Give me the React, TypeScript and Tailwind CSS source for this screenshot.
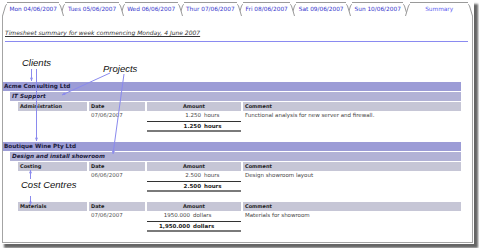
import React from "react";

// tabs across the top, last one is the active "Summary" tab
const tabs = [
  "Mon 04/06/2007",
  "Tues 05/06/2007",
  "Wed 06/06/2007",
  "Thur 07/06/2007",
  "Fri 08/06/2007",
  "Sat 09/06/2007",
  "Sun 10/06/2007",
];

interface CostCentreRow {
  name: string;
  date: string;
  amount: string;
  unit: string;
  total: string;
  comment: string;
  numW: string;
}

interface Client {
  name: string;
  project: string;
  centres: CostCentreRow[];
}

const clients: Client[] = [
  {
    name: "Acme Consulting Ltd",
    project: "IT Support",
    centres: [
      {
        name: "Administration",
        date: "07/06/2007",
        amount: "1.250",
        unit: "hours",
        total: "1.250",
        comment: "Functional analysis for new server and firewall.",
        numW: "w-[54px]",
      },
    ],
  },
  {
    name: "Boutique Wine Pty Ltd",
    project: "Design and install showroom",
    centres: [
      {
        name: "Costing",
        date: "06/06/2007",
        amount: "2.500",
        unit: "hours",
        total: "2.500",
        comment: "Design showroom layout",
        numW: "w-[54px]",
      },
      {
        name: "Materials",
        date: "07/06/2007",
        amount: "1950.000",
        unit: "dollars",
        total: "1,950.000",
        comment: "Materials for showroom",
        numW: "w-[43px]",
      },
    ],
  },
];

const TabEdge = ({ side }: { side: "l" | "r" }) => (
  <svg width="5" height="14" className="block shrink-0">
    {side === "l" ? (
      <>
        <polygon points="0.5,14 3.6,3.6 5,2.5 5,14" fill="#fff" />
        <path d="M0.5 14 L3.6 3.6 Q4.1 2.5 5 2.5" stroke="#9a9a9a" fill="none" />
      </>
    ) : (
      <>
        <polygon points="0,2.5 1.4,3.6 4.5,14 0,14" fill="#fff" />
        <path d="M0 2.5 Q0.9 2.5 1.4 3.6 L4.5 14" stroke="#9a9a9a" fill="none" />
      </>
    )}
  </svg>
);

const Tab = ({ label, active, z }: { label: string; active?: boolean; z: number }) => (
  <div
    className={`relative flex h-[14px] ${active ? "flex-1 -ml-[3px]" : "-ml-[4px] first:ml-0"}`}
    style={{ zIndex: z }}
  >
    <TabEdge side="l" />
    <div
      className={`flex-1 flex items-center justify-center border-t border-[#9a9a9a] bg-white px-[2.5px] text-[5.8px] leading-none whitespace-nowrap ${
        active ? "text-[#5c5cf0]" : "text-[#3434cc]"
      }`}
    >
      {label}
    </div>
    <TabEdge side="r" />
  </div>
);

const CostCentre = ({ c }: { c: CostCentreRow }) => (
  <div className="ml-[15px] mr-[11px]">
    <div className="grid grid-cols-[69px_56px_94px_218px] gap-x-[2px] h-[9px] text-[5px] font-bold leading-[9px] text-[#222]">
      <div className="bg-[#c6c6d6] pl-[2px]">{c.name}</div>
      <div className="bg-[#c6c6d6] pl-[2px]">Date</div>
      <div className="bg-[#c6c6d6] text-center">Amount</div>
      <div className="bg-[#c6c6d6] pl-[2px]">Comment</div>
    </div>
    <div className="grid grid-cols-[69px_56px_94px_218px] gap-x-[2px] h-[9px] text-[5.5px] leading-[9px] text-[#444]">
      <div />
      <div className="pl-[2px] text-[#555]">{c.date}</div>
      <div className="flex">
        <div className={`${c.numW} text-right`}>{c.amount}</div>
        <div className="pl-[3px]">{c.unit}</div>
      </div>
      <div className="pl-[2px]">{c.comment}</div>
    </div>
    <div className="mt-[1px] grid grid-cols-[69px_56px_94px_218px] gap-x-[2px] text-[5.5px] font-bold text-[#222]">
      <div />
      <div />
      <div className="flex h-[11px] items-center border-t border-t-[#333] border-b-2 border-b-[#7a7a7a]">
        <div className={`${c.numW} text-right`}>{c.total}</div>
        <div className="pl-[3px]">{c.unit}</div>
      </div>
      <div />
    </div>
  </div>
);

// small helper to draw a line with an arrow head at its end
const Arrow = ({ x1, y1, x2, y2 }: { x1: number; y1: number; x2: number; y2: number }) => {
  const a = Math.atan2(y2 - y1, x2 - x1);
  const s = 3.5;
  const p1 = [x2 - s * Math.cos(a - 0.45), y2 - s * Math.sin(a - 0.45)];
  const p2 = [x2 - s * Math.cos(a + 0.45), y2 - s * Math.sin(a + 0.45)];
  return (
    <g>
      <line x1={x1} y1={y1} x2={x2} y2={y2} stroke="#8a8aee" strokeWidth="1" />
      <polygon points={`${x2},${y2} ${p1[0]},${p1[1]} ${p2[0]},${p2[1]}`} fill="#8a8aee" />
    </g>
  );
};

export default function App() {
  return (
    <div className="relative w-[479px] h-[248px] bg-white font-['DejaVu_Sans',sans-serif] overflow-hidden">
      <div className="w-[474px] h-[244px] bg-white pl-[2px] pt-[2px] shadow-[4px_4px_2px_rgba(0,0,0,0.6)]">
        {/* tab strip */}
        <div className="flex w-[471px]">
          {tabs.map((t, i) => (
            <Tab key={t} label={t} z={tabs.length - i} />
          ))}
          <Tab label="Summary" active z={20} />
        </div>

        {/* panel */}
        <div className="w-[471px] h-[227px] border-l border-r border-b border-[#a4a4a4] pt-[13px]">
          <div className="ml-[2px] h-[8px] text-[6px] leading-[8px] italic underline text-[#333]">
            Timesheet summary for week commencing Monday, 4 June 2007
          </div>
          <div className="mt-[4px] ml-[2px] mr-[4px] h-px bg-[#8a8af0]" />

          <div className="mt-[40px]">
            {clients.map((cl, ci) => (
              <div key={cl.name} className={ci > 0 ? "mt-[10px]" : ""}>
                <div className="mr-[11px] h-[9px] bg-[#9c9cd6] pl-[1px] text-[5.7px] font-bold leading-[9px] text-[#1a1a3a]">
                  {cl.name}
                </div>
                <div className="mt-[1px] ml-[7px] mr-[11px] h-[9px] bg-[#b2b2d6] pl-[2px] text-[5.7px] font-bold italic leading-[9px] text-[#1a1a3a]">
                  {cl.project}
                </div>
                <div className="mt-[1px]">
                  {cl.centres.map((c, i) => (
                    <div key={c.name} className={i > 0 ? "mt-[10px]" : ""}>
                      <CostCentre c={c} />
                    </div>
                  ))}
                </div>
              </div>
            ))}
          </div>
        </div>
      </div>

      {/* annotations drawn over the screenshot */}
      <svg width="479" height="248" className="absolute inset-0 pointer-events-none">
        <Arrow x1={31.5} y1={69} x2={31.5} y2={81} />
        <Arrow x1={36.5} y1={69} x2={36.5} y2={141} />
        <Arrow x1={110} y1={73} x2={62} y2={95} />
        <Arrow x1={124} y1={74} x2={113} y2={154} />
        <Arrow x1={30.5} y1={179} x2={30.5} y2={170} />
        <Arrow x1={30.5} y1={196} x2={30.5} y2={205} />
      </svg>
      <div className="absolute left-[22px] top-[58px] text-[9.5px] leading-none italic text-[#111] font-['Liberation_Sans',sans-serif]">
        Clients
      </div>
      <div className="absolute left-[103px] top-[64px] text-[9.5px] leading-none italic text-[#111] font-['Liberation_Sans',sans-serif]">
        Projects
      </div>
      <div className="absolute left-[21px] top-[180px] text-[9.5px] leading-none italic text-[#111] font-['Liberation_Sans',sans-serif]">
        Cost Centres
      </div>
    </div>
  );
}
